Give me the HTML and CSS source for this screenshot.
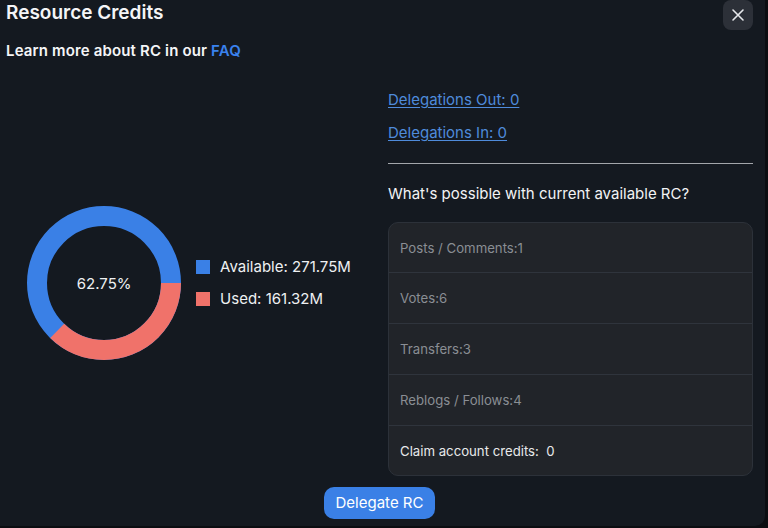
FILE: index.html
```html
<!DOCTYPE html>
<html lang="en">
<head>
<meta charset="utf-8">
<title>Resource Credits</title>
<link rel="stylesheet" href="styles.css">
</head>
<body>
<div class="modal">
  <div class="header">
    <h2 class="title">Resource Credits</h2>
    <button class="close" aria-label="Close">
      <svg width="14" height="14" viewBox="0 0 14 14"><path d="M2 2L12 12M12 2L2 12" stroke="#e6e8eb" stroke-width="1.6" stroke-linecap="round"/></svg>
    </button>
  </div>
  <p class="learn">Learn more about RC in our <a class="faq" href="#">FAQ</a></p>
  <div class="body">
    <div class="chart-col">
      <div class="donut">
        <svg width="154" height="154" viewBox="0 0 154 154">
          <circle cx="77" cy="77" r="67" fill="none" stroke="#3a80e6" stroke-width="20"/>
          <circle cx="77" cy="77" r="67" fill="none" stroke="#f0726a" stroke-width="20" stroke-dasharray="156.81 420.97"/>
        </svg>
        <span class="pct">62.75%</span>
      </div>
      <ul class="legend">
        <li><span class="sw sw-blue"></span>Available: 271.75M</li>
        <li><span class="sw sw-red"></span>Used: 161.32M</li>
      </ul>
    </div>
    <div class="info-col">
      <a class="deleg" href="#">Delegations Out: 0</a>
      <a class="deleg deleg-in" href="#">Delegations In: 0</a>
      <hr class="sep">
      <p class="question">What's possible with current available RC?</p>
      <div class="card">
        <div class="row muted">Posts / Comments:1</div>
        <div class="row muted">Votes:6</div>
        <div class="row muted">Transfers:3</div>
        <div class="row muted">Reblogs / Follows:4</div>
        <div class="row">Claim account credits:&nbsp; 0</div>
      </div>
    </div>
  </div>
  <div class="actions">
    <button class="primary">Delegate RC</button>
  </div>
</div>
</body>
</html>
```
FILE: styles.css
```css
html, body {
  margin: 0;
  padding: 0;
}
body {
  background: #0b0d11;
  font-family: Inter, "Noto Sans", sans-serif;
  color: #f2f3f5;
  width: 768px;
  height: 528px;
  overflow: hidden;
}
.modal {
  width: 765px;
  height: 526px;
  box-sizing: border-box;
  background: #141920;
  border-radius: 0 0 10px 0;
  padding: 0 12px 0 6px;
}
.header {
  display: flex;
  justify-content: space-between;
  align-items: flex-start;
  height: 30px;
}
.title {
  margin: 0;
  font-size: 19px;
  line-height: 26px;
  font-weight: 600;
  color: #f4f5f7;
}
.close {
  width: 30px;
  height: 30px;
  border: none;
  border-radius: 8px;
  background: #2c3038;
  display: flex;
  align-items: center;
  justify-content: center;
  padding: 0;
}
.learn {
  margin: 11px 0 0;
  font-size: 15px;
  line-height: 20px;
  font-weight: 600;
  letter-spacing: 0.15px;
  color: #f4f5f7;
}
.faq {
  color: #3a82ee;
  text-decoration: none;
}
.body {
  display: grid;
  grid-template-columns: 1fr 365px;
  column-gap: 16px;
  align-items: center;
  margin-top: 29px;
}
.chart-col {
  display: flex;
  align-items: center;
  justify-content: center;
  gap: 15px;
}
.donut {
  position: relative;
  width: 154px;
  height: 154px;
}
.donut svg {
  display: block;
}
.pct {
  position: absolute;
  inset: 0;
  display: flex;
  align-items: center;
  justify-content: center;
  font-size: 15px;
  color: #eef0f2;
}
.legend {
  list-style: none;
  margin: 0;
  padding: 0;
  display: flex;
  flex-direction: column;
  gap: 12px;
}
.legend li {
  display: flex;
  align-items: center;
  gap: 10px;
  font-size: 15px;
  line-height: 20px;
  color: #eef0f2;
}
.sw {
  width: 14px;
  height: 14px;
  display: inline-block;
}
.sw-blue { background: #3a80e6; }
.sw-red { background: #f0726a; }
.info-col {
  display: flex;
  flex-direction: column;
  align-items: flex-start;
}
.deleg {
  font-size: 15px;
  line-height: 20px;
  color: #4f8bdb;
  text-decoration: underline;
  text-underline-offset: 2px;
}
.deleg-in {
  margin-top: 13px;
}
.sep {
  align-self: stretch;
  margin: 20px 0 0;
  border: none;
  border-top: 1px solid #a3a6ab;
  height: 0;
}
.question {
  margin: 19px 0 0;
  font-size: 15px;
  line-height: 22px;
  color: #f2f3f5;
}
.card {
  align-self: stretch;
  margin-top: 17px;
  background: #212429;
  border: 1px solid #2c3139;
  border-radius: 10px;
  overflow: hidden;
}
.row {
  height: 49px;
  box-sizing: border-box;
  padding: 0 11px;
  display: flex;
  align-items: center;
  font-size: 13.2px;
  color: #e8e9eb;
}
.row + .row {
  border-top: 1px solid #2f343c;
  height: 51px;
}
.row:last-child {
  height: 50px;
}
.row.muted {
  color: #8a8e94;
}
.actions {
  display: flex;
  justify-content: center;
  margin-top: 11px;
}
.primary {
  font-family: Inter, "Noto Sans", sans-serif;
  font-size: 15px;
  line-height: 20px;
  color: #ffffff;
  background: #3a80e6;
  border: none;
  border-radius: 10px;
  padding: 6px 12px;
}
```
